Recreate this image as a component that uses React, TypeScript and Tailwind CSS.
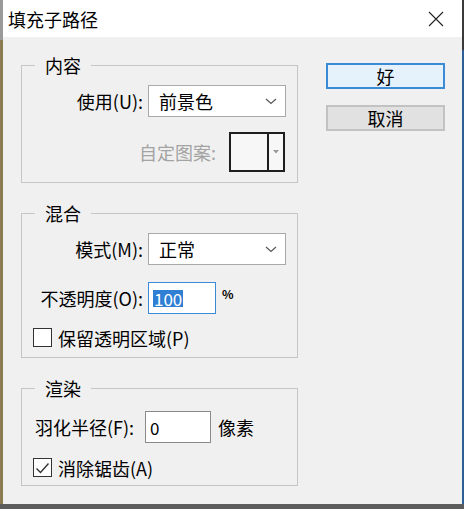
import type { ReactNode } from 'react'

const font = { fontFamily: '"Noto Sans CJK SC", "Noto Sans", sans-serif' }

function Group({ title, children, className = '' }: { title: string; children: ReactNode; className?: string }) {
  return (
    <fieldset className={`border border-[#c6c6c6] p-0 m-0 ${className}`}>
      <legend className="ml-[13px] px-[10px] text-[18px] leading-[22px] text-black">{title}</legend>
      {children}
    </fieldset>
  )
}

function Chevron() {
  return (
    <svg width="12" height="7" viewBox="0 0 12 7" className="shrink-0">
      <path d="M1 1 L6 5.5 L11 1" fill="none" stroke="#5a5a5a" strokeWidth="1.3" />
    </svg>
  )
}

function Select({ value }: { value: string }) {
  return (
    <div className="ml-[5px] flex h-[32px] w-[138px] items-center justify-between border border-[#a9a9a9] bg-white pl-[10px] pr-[8px]">
      <span className="text-[18px] leading-none">{value}</span>
      <Chevron />
    </div>
  )
}

function CheckBox({ checked, label }: { checked: boolean; label: string }) {
  return (
    <div className="flex h-[19px] items-center pl-[11px]">
      <div className="flex h-[19px] w-[19px] items-center justify-center border border-[#333] bg-white">
        {checked && (
          <svg width="15" height="12" viewBox="0 0 15 12">
            <path d="M1.5 6.5 L5.5 10.5 L13.5 1.5" fill="none" stroke="#333" strokeWidth="1.4" />
          </svg>
        )}
      </div>
      <span className="ml-[6px] text-[18px] leading-none">{label}</span>
    </div>
  )
}

export default function App() {
  return (
    <div className="flex h-[509px] w-[464px] flex-col overflow-hidden bg-[#4a4a4a] text-black" style={font}>
      <div className="flex h-[504px]">
        <div className="flex w-[3px] flex-col">
          <div className="h-[40px] bg-[#9a9a9a]" />
          <div className="flex-1 bg-[#8a7b52]" />
        </div>

        <div className="flex flex-1 flex-col bg-[#f0f0f0]">
          {/* title bar */}
          <div className="flex h-[37px] items-center justify-between bg-white pl-[5px] pr-[18px]">
            <span className="text-[18px] leading-none">填充子路径</span>
            <svg width="16" height="16" viewBox="0 0 16 16">
              <path d="M1 1 L15 15 M15 1 L1 15" stroke="#222" strokeWidth="1.1" />
            </svg>
          </div>

          <div className="flex flex-1 pl-[18px] pt-[17px]">
            <div className="flex w-[277px] flex-col">
              <Group title="内容">
                <div className="pb-[10px] pt-[9px]">
                  <div className="flex items-center">
                    <span className="w-[121px] text-right text-[18px] leading-none">使用(U):</span>
                    <Select value="前景色" />
                  </div>
                  <div className="mt-[15px] flex items-center justify-end pr-[12px]">
                    <span className="text-[18px] leading-none text-[#a3a3a3]">自定图案:</span>
                    <div className="ml-[13px] flex h-[40px] w-[56px] border-2 border-[#1e1e1e] bg-[#f7f7f7]">
                      <div className="flex-1" />
                      <div className="flex w-[16px] items-center justify-center border-l-2 border-[#1e1e1e]">
                        <svg width="6" height="4" viewBox="0 0 6 4">
                          <path d="M0 0 L6 0 L3 3.5 Z" fill="#9a9a9a" />
                        </svg>
                      </div>
                    </div>
                  </div>
                </div>
              </Group>

              <Group title="混合" className="mt-[19px]">
                <div className="pb-[10px] pt-[9px]">
                  <div className="flex items-center">
                    <span className="w-[121px] text-right text-[18px] leading-none">模式(M):</span>
                    <Select value="正常" />
                  </div>
                  <div className="mt-[17px] flex items-center">
                    <span className="w-[121px] text-right text-[18px] leading-none whitespace-nowrap">不透明度(O):</span>
                    <div className="ml-[5px] flex h-[32px] w-[68px] items-center border border-[#3a8ad6] bg-white pl-[4px]">
                      <span className="bg-[#2f7fd4] px-px text-[17px] leading-[17px] text-white">100</span>
                    </div>
                    <span className="mb-[8px] ml-[6px] text-[12px] font-bold leading-none">%</span>
                  </div>
                  <div className="mt-[14px]">
                    <CheckBox checked={false} label="保留透明区域(P)" />
                  </div>
                </div>
              </Group>

              <Group title="渲染" className="mt-[19px]">
                <div className="pb-[8px] pt-[12px]">
                  <div className="flex items-center pl-[13px]">
                    <span className="text-[18px] leading-none whitespace-nowrap">羽化半径(F):</span>
                    <div className="ml-[11px] flex h-[32px] w-[66px] items-center border border-[#8a8a8a] bg-white pl-[4px]">
                      <span className="text-[17px] leading-none">0</span>
                    </div>
                    <span className="ml-[7px] text-[18px] leading-none">像素</span>
                  </div>
                  <div className="mt-[15px]">
                    <CheckBox checked label="消除锯齿(A)" />
                  </div>
                </div>
              </Group>
            </div>

            <div className="ml-[28px] flex w-[119px] flex-col gap-[16px] pt-[9px]">
              <div className="flex h-[26px] items-center justify-center border-2 border-[#3a8ad6] bg-[#e5f1fb] text-[18px] leading-none">
                好
              </div>
              <div className="flex h-[26px] items-center justify-center border-2 border-[#c2c2c2] bg-[#e1e1e1] text-[18px] leading-none">
                取消
              </div>
            </div>
          </div>
        </div>

        <div className="flex w-[2px] flex-col">
          <div className="h-[50px] bg-[#3a3a3a]" />
          <div className="flex-1 bg-[#2d5f96]" />
        </div>
      </div>
      <div className="flex-1 bg-[#5c5c5c]" />
    </div>
  )
}
